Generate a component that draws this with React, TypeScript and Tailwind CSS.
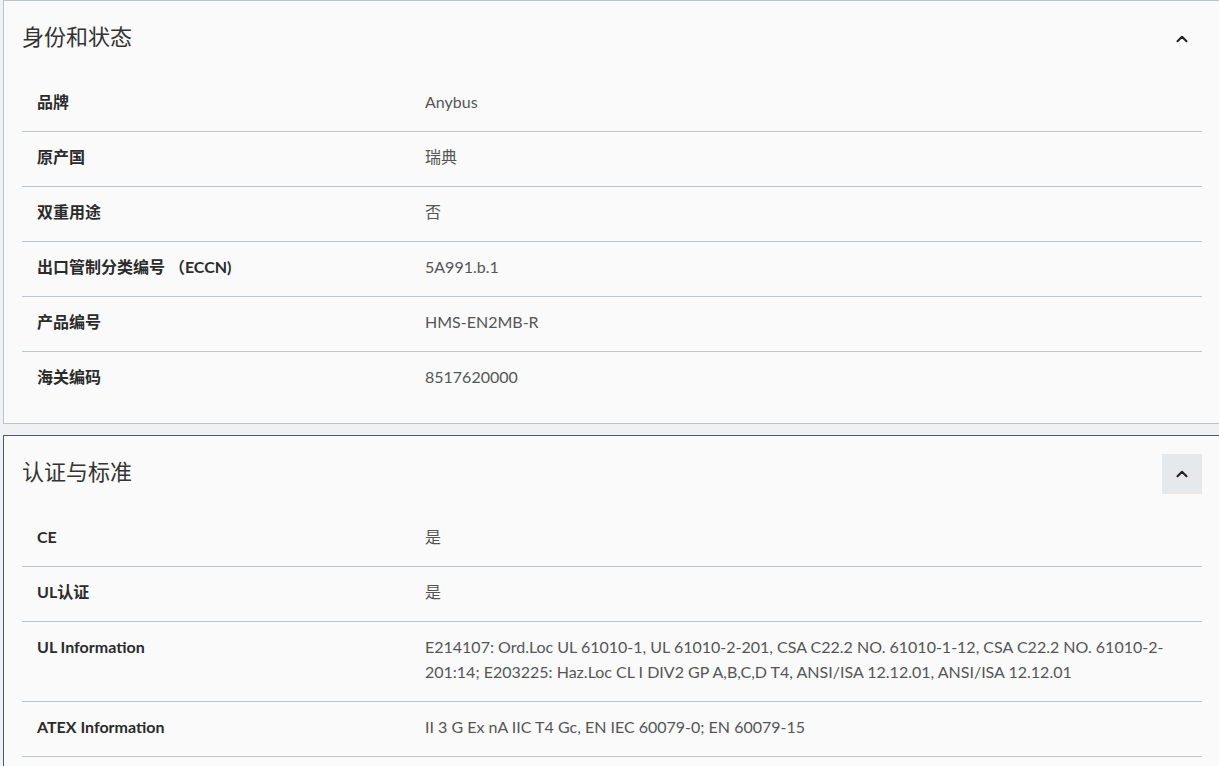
import { ChevronUp } from 'lucide-react'

type Row = { label: string; value: string }

const IDENTITY: Row[] = [
  { label: '品牌', value: 'Anybus' },
  { label: '原产国', value: '瑞典' },
  { label: '双重用途', value: '否' },
  { label: '出口管制分类编号 （ECCN)', value: '5A991.b.1' },
  { label: '产品编号', value: 'HMS-EN2MB-R' },
  { label: '海关编码', value: '8517620000' },
]

const CERTS: Row[] = [
  { label: 'CE', value: '是' },
  { label: 'UL认证', value: '是' },
  {
    label: 'UL Information',
    value:
      'E214107: Ord.Loc UL 61010-1, UL 61010-2-201, CSA C22.2 NO. 61010-1-12, CSA C22.2 NO. 61010-2-201:14; E203225: Haz.Loc CL I DIV2 GP A,B,C,D T4, ANSI/ISA 12.12.01, ANSI/ISA 12.12.01',
  },
  { label: 'ATEX Information', value: 'II 3 G Ex nA IIC T4 Gc, EN IEC 60079-0; EN 60079-15' },
  { label: '', value: '' },
]

function Panel({ title, rows, active }: { title: string; rows: Row[]; active?: boolean }) {
  return (
    <section
      className={`ml-[3px] w-[1218px] border bg-[#fafafa] px-[18px] pb-[17px] ${
        active ? 'border-[#4a5b6b]' : 'border-[#bcc3c9]'
      }`}
    >
      <div className="flex items-start justify-between pt-[18px] pb-[18px]">
        <h2 className="text-[22px] leading-9 text-[#333333]">{title}</h2>
        <button
          className={`flex h-10 w-10 items-center justify-center ${active ? 'bg-[#e6e9eb]' : ''}`}
        >
          <ChevronUp size={18} strokeWidth={2.8} className="text-[#222]" />
        </button>
      </div>
      <div>
        {rows.map((r, i) => (
          <div
            key={i}
            className={`flex px-[15px] pt-[12px] pb-[17px] text-base leading-[25px] ${
              i > 0 ? 'border-t border-[#bcc5cd]' : ''
            }`}
          >
            <div className="w-[388px] shrink-0 font-bold text-[#2b2b2b]">{r.label || '\u00a0'}</div>
            <div className="flex-1 text-[#555]">{r.value}</div>
          </div>
        ))}
      </div>
    </section>
  )
}

export default function App() {
  return (
    <div
      className="h-[766px] w-[1219px] overflow-hidden bg-[#f0f1f3]"
      style={{ fontFamily: 'Lato, "Noto Sans CJK SC", sans-serif' }}
    >
      <Panel title="身份和状态" rows={IDENTITY} />
      <div className="mt-[11px]">
        <Panel title="认证与标准" rows={CERTS} active />
      </div>
    </div>
  )
}
